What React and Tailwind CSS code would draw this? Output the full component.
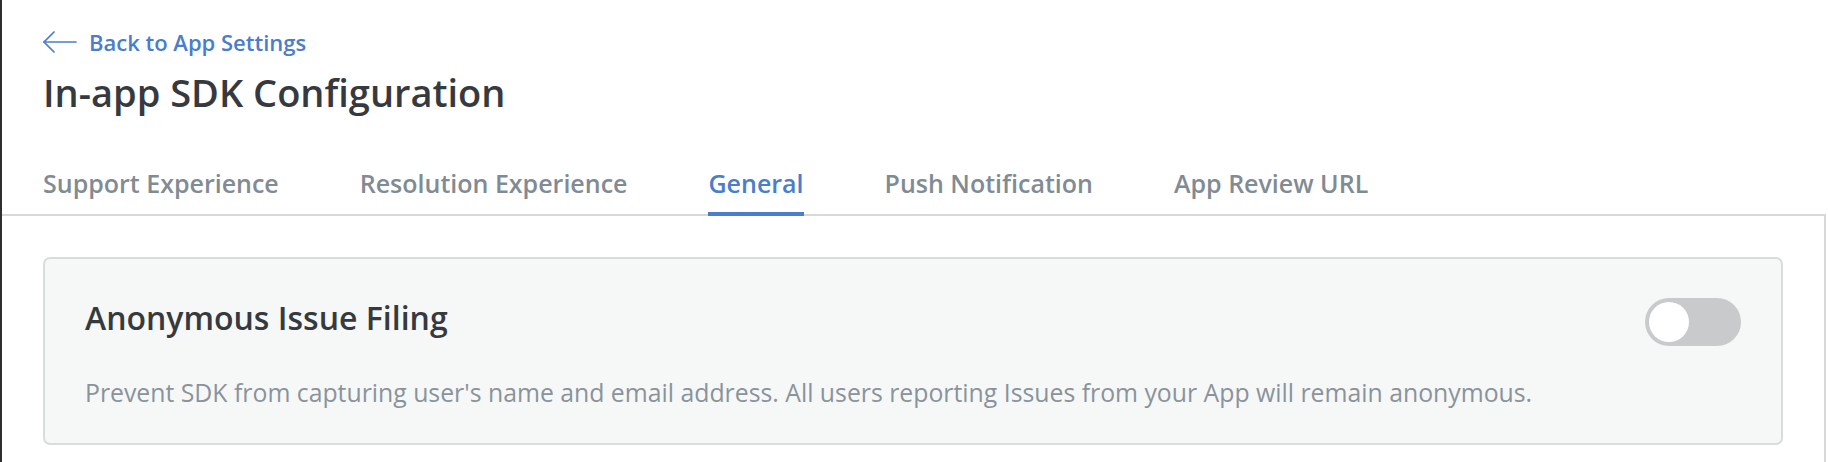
import { useState } from 'react';

const TABS = [
  'Support Experience',
  'Resolution Experience',
  'General',
  'Push Notification',
  'App Review URL',
];

function BackArrow() {
  return (
    <svg width="34" height="22" viewBox="0 0 34 22" fill="none" stroke="#4a7dcb" strokeWidth="1.7" strokeLinecap="round">
      <path d="M1 11 H33" />
      <path d="M11 1 L1 11 L11 21" />
    </svg>
  );
}

function Toggle({ on, onChange }) {
  return (
    <button
      onClick={() => onChange(!on)}
      className={`w-[96px] h-[48px] rounded-full p-[4px] flex shrink-0 transition-colors ${on ? 'bg-[#4a7dcb] justify-end' : 'bg-[#c9cacc] justify-start'}`}
    >
      <span className="block w-[40px] h-[40px] rounded-full bg-white"></span>
    </button>
  );
}

export default function App() {
  const [active, setActive] = useState('General');
  const [anonymous, setAnonymous] = useState(false);

  return (
    <div className="w-[1828px] h-[462px] bg-white flex overflow-hidden font-['Open_Sans',sans-serif]">
      <div className="w-[2px] shrink-0 bg-[#2f2f2f]"></div>

      <div className="w-[1824px] flex flex-col">
        {/* Header */}
        <div className="pl-[41px] pt-[29px]">
          <a href="#" className="flex items-center gap-[12px] text-[22px] leading-[1.2] font-semibold text-[#4a7dcb]">
            <BackArrow />
            <span>Back to App Settings</span>
          </a>
          <h1 className="mt-[15px] text-[38px] leading-[1.2] font-semibold text-[#363a3f]">
            In-app SDK Configuration
          </h1>
        </div>

        {/* Tabs */}
        <div className="mt-[52px] pl-[41px] flex gap-[81px] border-b-2 border-[#d8d8d8]">
          {TABS.map(t => (
            <button
              key={t}
              onClick={() => setActive(t)}
              className={`-mb-[2px] pb-[14px] border-b-4 text-[25px] leading-[1.2] font-semibold ${active === t ? 'border-[#4a7dcb] text-[#4a7dcb]' : 'border-transparent text-[#818b93]'}`}
            >
              {t}
            </button>
          ))}
        </div>

        {/* Body */}
        <div className="flex-1 border-r-2 border-[#d8d8d8] px-[41px] pt-[41px]">
          <div className="bg-[#f6f8f8] border-2 border-[#d9dcdc] rounded-[7px] px-[40px] pt-[39px] h-[188px]">
            <div className="flex items-center justify-between">
              <h2 className="mb-[8px] text-[32px] leading-[1.2] font-semibold text-[#363a3e]">
                Anonymous Issue Filing
              </h2>
              <Toggle on={anonymous} onChange={setAnonymous} />
            </div>
            <p className="mt-[29px] text-[24.8px] leading-[1.4] text-[#8a939b]">
              Prevent SDK from capturing user's name and email address. All users reporting Issues from your App will remain anonymous.
            </p>
          </div>
        </div>
      </div>
    </div>
  );
}
